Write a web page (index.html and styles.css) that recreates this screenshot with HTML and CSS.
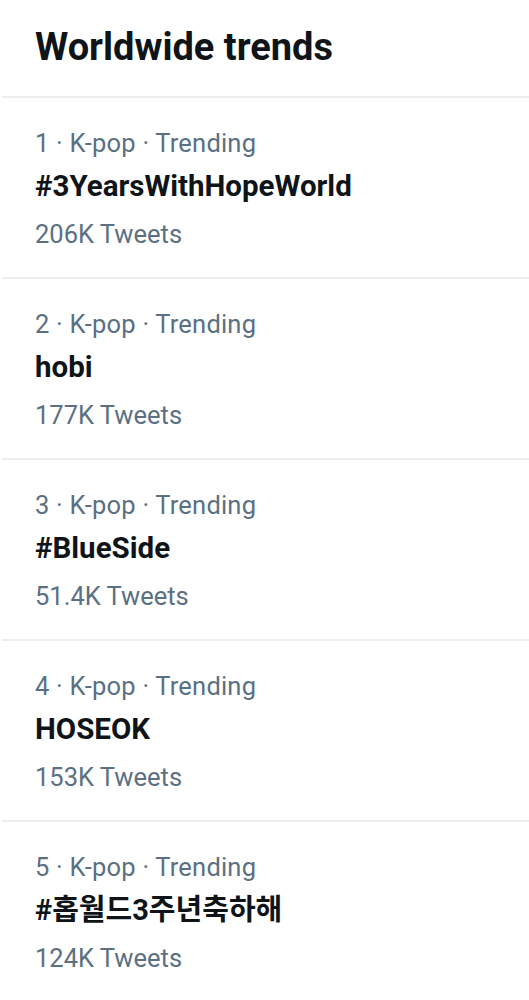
FILE: index.html
```html
<!DOCTYPE html>
<html>
<head>
<meta charset="utf-8">
<link rel="stylesheet" href="styles.css">
</head>
<body>
<div class="page">
  <h1 class="header">Worldwide trends</h1>
  <ul class="trends">
    <li class="trend">
      <div class="meta">1 · K-pop · Trending</div>
      <div class="title">#3YearsWithHopeWorld</div>
      <div class="count">206K Tweets</div>
    </li>
    <li class="trend">
      <div class="meta">2 · K-pop · Trending</div>
      <div class="title">hobi</div>
      <div class="count">177K Tweets</div>
    </li>
    <li class="trend">
      <div class="meta">3 · K-pop · Trending</div>
      <div class="title">#BlueSide</div>
      <div class="count">51.4K Tweets</div>
    </li>
    <li class="trend">
      <div class="meta">4 · K-pop · Trending</div>
      <div class="title">HOSEOK</div>
      <div class="count">153K Tweets</div>
    </li>
    <li class="trend">
      <div class="meta">5 · K-pop · Trending</div>
      <div class="title ko">#홉월드3주년축하해</div>
      <div class="count">124K Tweets</div>
    </li>
  </ul>
</div>
</body>
</html>
```

FILE: styles.css
```css
html, body {
  margin: 0;
  padding: 0;
  background: #ffffff;
}
body {
  font-family: Roboto, "Noto Sans CJK KR", sans-serif;
  width: 529px;
  height: 1000px;
  overflow: hidden;
}
.page {
  padding-left: 2px;
}
.header {
  margin: 0;
  padding: 24px 0 0 33px;
  height: 96px;
  box-sizing: border-box;
  font-size: 38px;
  line-height: 46px;
  font-weight: 700;
  color: #0f1419;
}
.trends {
  list-style: none;
  margin: 0;
  padding: 0;
}
.trend {
  border-top: 2px solid #ebeef0;
  padding: 29px 0 27px 33px;
}
.meta {
  font-size: 25.5px;
  line-height: 32px;
  letter-spacing: 0.2px;
  color: #5b7083;
}
.title {
  margin-top: 11px;
  font-size: 29.5px;
  line-height: 32px;
  font-weight: 700;
  color: #0f1419;
}
.title.ko {
  font-size: 29px;
}
.count {
  margin-top: 16px;
  font-size: 25.5px;
  line-height: 32px;
  color: #5b7083;
}
```
